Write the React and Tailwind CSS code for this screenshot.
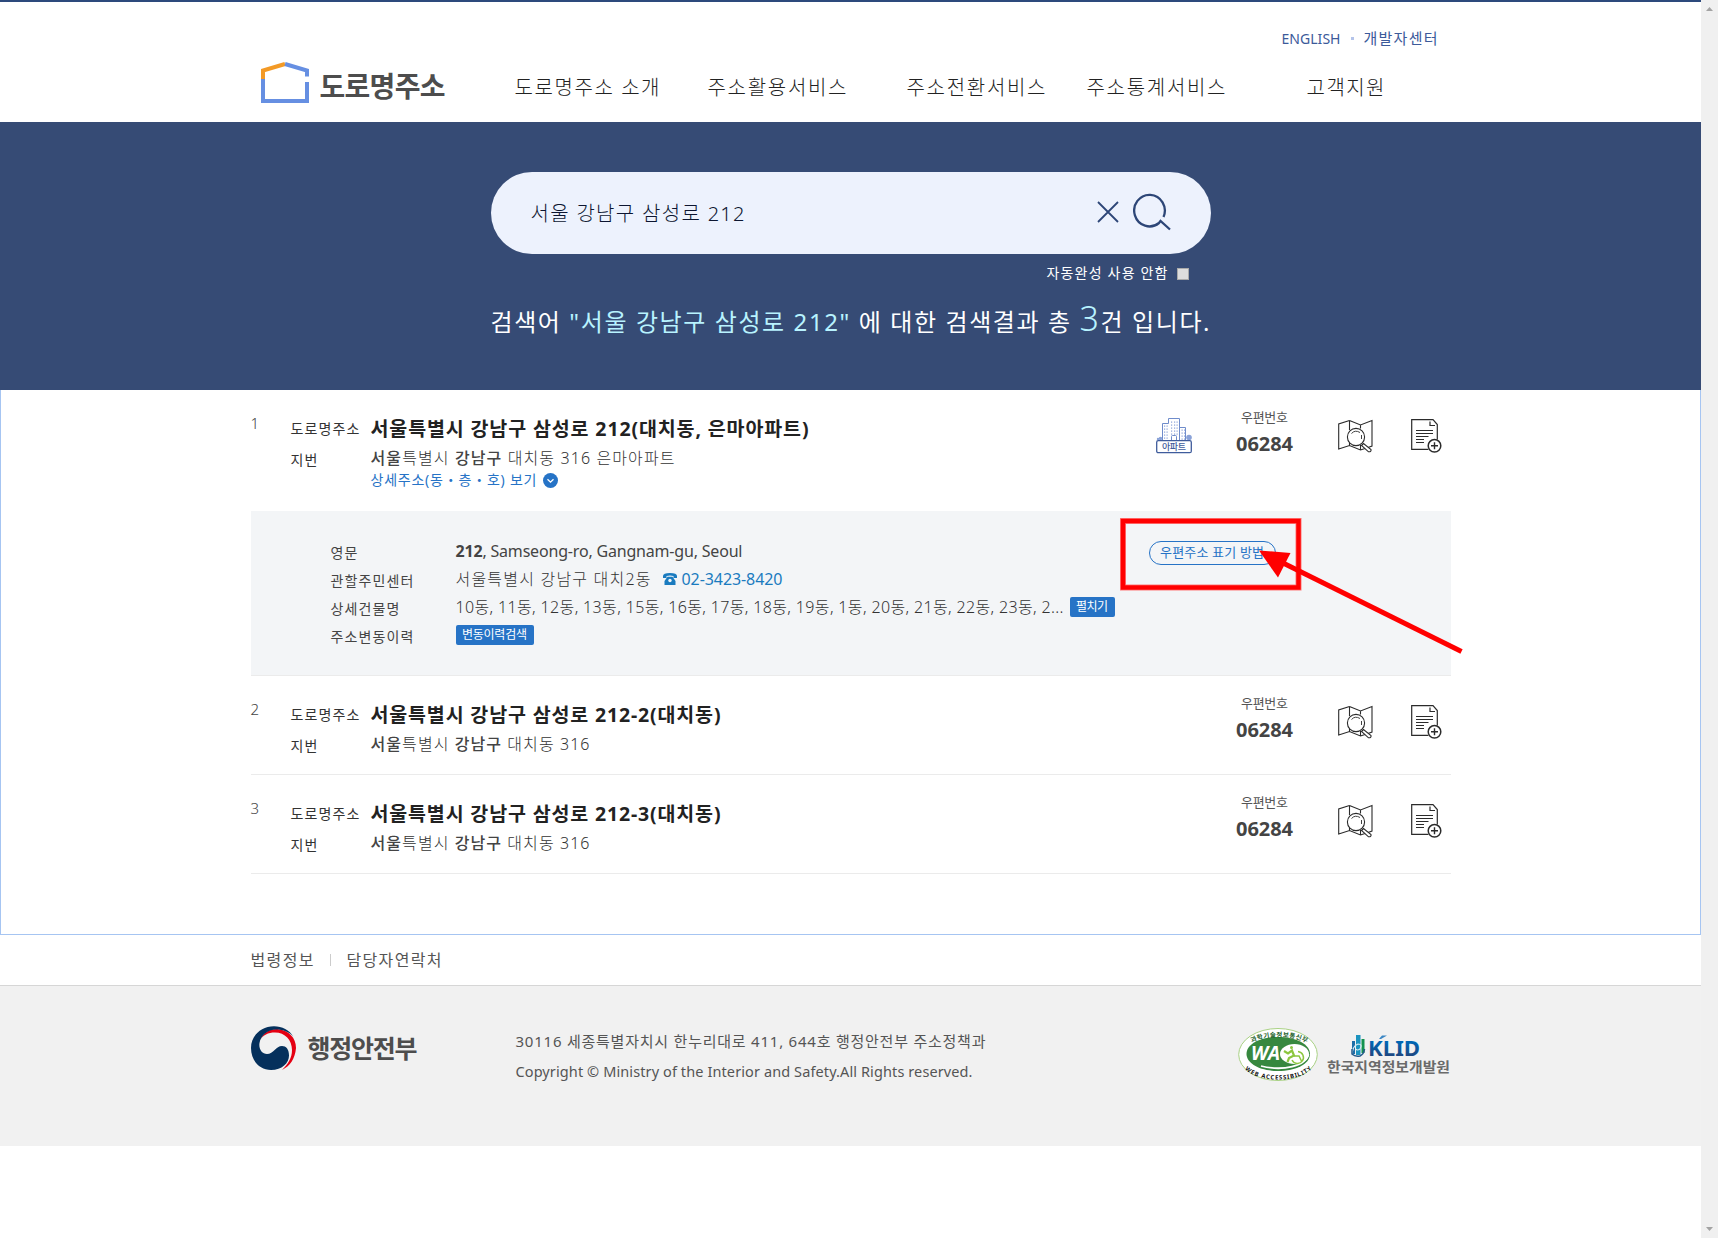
import React, { useLayoutEffect, useRef, useState } from "react";

/* Single line of text whose letter spacing is adjusted to fill a given width. */
function Fit({ w, className = "", children }) {
  const ref = useRef(null);
  const [gap, setGap] = useState(0);
  useLayoutEffect(() => {
    const el = ref.current;
    const n = el.textContent.length;
    setGap((w - el.getBoundingClientRect().width) / Math.max(1, n - 1));
  }, [w]);
  return (
    <span className={`inline-block whitespace-nowrap ${className}`}>
      <span ref={ref} style={{ letterSpacing: gap, marginRight: -gap }}>
        {children}
      </span>
    </span>
  );
}

function Logo() {
  return (
    <svg width="48" height="42" viewBox="0 0 48 42" fill="none" strokeWidth="4">
      <path d="M2 17V8.5L24 2" stroke="#f39a26" />
      <path d="M24 2L46 8.5V14.5M46 20V39H2V17" stroke="#668fe2" />
    </svg>
  );
}

function MapIcon() {
  return (
    <svg width="36" height="34" viewBox="0 0 36 34" fill="none" stroke="#2b2b2b" strokeWidth="1.1">
      <path d="M11.5 1.5L.7 5V30L11.5 26.5L22.5 31L27 29.5M11.5 1.5L22.5 6L34 1.5V27L30 28.5M11.5 1.5V11M11.5 24V26.5M22.5 6V9.500M22.5 26V31" />
      <circle cx="18" cy="18" r="8.600" fill="#fff" />
      <path d="M13.500 14.500Q17 10.500 22 13.500M23.500 16V20" strokeWidth=".9" />
      <path d="M23.500 26.500L25.500 24.500L33 30.500Q33.500 33 30.500 32.800Z" fill="#fff" />
    </svg>
  );
}

function DocIcon() {
  return (
    <svg width="31" height="34" viewBox="0 0 31 34" fill="none" stroke="#2b2b2b" strokeWidth="1.200">
      <path d="M17.500 30.400H.7V.7H22L26.300 5.500V20.500" />
      <path d="M19 2.500V6.500H24" />
      <path d="M5 11.500H22M5 14.500H22M5 17.500H17.500M5 20.500H13M5 23.500H13" />
      <circle cx="23.500" cy="26.800" r="6.300" fill="#fff" strokeWidth="1.500" />
      <path d="M20 26.800H27M23.500 23.300V30.300" strokeWidth="1.400" />
    </svg>
  );
}

function ApartmentIcon() {
  const dots = [];
  for (let y = 4; y < 18; y += 3) for (const x of [15.5, 18.5, 21]) dots.push([x, y]);
  for (let y = 8; y < 22; y += 3) for (const x of [8.5, 11]) dots.push([x, y]);
  for (let y = 12; y < 22; y += 3) for (const x of [26, 28.500]) dots.push([x, y]);
  return (
    <svg width="36" height="36" viewBox="0 0 36 36" fill="none" stroke="#6f8ccb">
      <path d="M6.500 22V5.500H12.500V.5H23.500V22M24 9.500H29.500V22M15.500 22V18.500Q15.500 17.500 16.500 17.500H19.500Q20.500 17.500 20.500 18.500V22" />
      <g fill="#8aa2d8" stroke="none">
        {dots.map(([x, y]) => (
          <rect key={`${x}-${y}`} x={x - 0.5} y={y - 0.5} width="1.200" height="1.200" />
        ))}
        <circle cx="33" cy="19.500" r="2.800" />
        <circle cx="4.500" cy="20.500" r="1.800" />
        <circle cx="2" cy="21" r="1.200" />
      </g>
      <rect x=".7" y="22.700" width="34.600" height="12" rx="1.500" stroke="#3f5c9c" strokeWidth="1.300" fill="#fff" />
      <text x="18" y="32" textAnchor="middle" textLength="24" fontSize="9" fontWeight="500" fill="#3f5c9c" stroke="none">아파트</text>
    </svg>
  );
}

function Taegeuk() {
  return (
    <svg width="46" height="44" viewBox="0 0 46 44">
      <path fill="#e50012" d="M9 14C13 6 19 3 26 3C38 4 45 12 45 22C44 33 39 40 31 44C37 38 41 32 41 24C41 14 34 6.500 24 6.500C17 6.500 12 9 9 14Z" />
      <path fill="#05305c" d="M23 .3C10 .3 0 10 0 22C0 35 9 44 20 44C31 44 38 37 38 29.500C38 23 35 20 31 20C25 20 22.500 28 16 28C11 28 7.500 23 8.500 17C10 9 17 3.500 25 3.500C32 3.500 39 6 42.500 11C38.500 4 31 .3 23 .3Z" />
    </svg>
  );
}

function WaMark() {
  return (
    <svg width="80" height="54" viewBox="0 0 80 54">
      <defs>
        <path id="waTop" d="M14 14.500A40 21 0 0 1 68 14.500" />
        <path id="waBottom" d="M8 40A35 16.500 0 0 0 73 39" />
      </defs>
      <ellipse cx="40" cy="26.500" rx="39.300" ry="26" fill="#fff" stroke="#a9d184" />
      <path d="M40 9C22 9 8.500 16 8.500 26C8.500 35.500 22 43 40 43C58 43 72 36 72 26C72 16 58 9 40 9Z" fill="#37883f" />
      <ellipse cx="56.500" cy="26" rx="14.500" ry="10" fill="#fff" />
      <path d="M23 38C45 43.500 68 38 70.500 26" fill="none" stroke="#fff" strokeWidth="1.800" />
      <text x="13" y="32" textLength="29" lengthAdjust="spacingAndGlyphs" fontSize="19" fontWeight="700" fontStyle="italic" fill="#fff">WA</text>
      <g fill="none" stroke="#8cc63f" strokeWidth="2">
        <circle cx="53.500" cy="19.500" r="1.500" fill="#8cc63f" stroke="none" />
        <path d="M46 23L50 25.500L54 22.500L56 27.500L51 30L49.500 34" strokeWidth="2.200" />
        <path d="M60 23.500A6 6 0 1 1 54 32M56 28H61L63.500 33" strokeWidth="1.500" />
      </g>
      <text fontSize="6.500" fontWeight="700" fill="#24632b">
        <textPath href="#waTop" textLength="56">과학기술정보통신부</textPath>
      </text>
      <text fontSize="6" fontWeight="700" fill="#111">
        <textPath href="#waBottom" textLength="69" dominantBaseline="middle">WEB ACCESSIBILITY</textPath>
      </text>
    </svg>
  );
}

function KlidMark() {
  return (
    <svg width="124" height="46" viewBox="0 0 124 46">
      <defs>
        <linearGradient id="klid" x1="0" y1="0" x2="0" y2="1">
          <stop offset=".3" stopColor="#0066b3" />
          <stop offset="1" stopColor="#2b3a6b" />
        </linearGradient>
      </defs>
      <rect x="25" y="7" width="3" height="13" fill="#1e6ea8" />
      <rect x="29" y="1" width="4.500" height="20" fill="#1b93bf" />
      <rect x="34.500" y="5" width="3" height="14" fill="#12924f" />
      <path d="M25 22Q25 12 31 10Q36 10 33 15Q30 17 29 15" fill="none" stroke="#d8eef4" strokeWidth="1.100" />
      <path d="M25 15V20Q28 23 33 22Q37 20 37.500 15" fill="none" stroke="#24598a" strokeWidth="1.500" />
      <text x="41" y="22" textLength="52" lengthAdjust="spacingAndGlyphs" fontSize="20.500" fontWeight="700" fill="url(#klid)">KLID</text>
      <path d="M52 5L55 1.500H60L54 5Z" fill="#3a86c4" />
      <text x="0" y="38" textLength="123" lengthAdjust="spacingAndGlyphs" fontSize="14" fontWeight="700" fill="#6a6a6a">한국지역정보개발원</text>
    </svg>
  );
}

function Result({ n, title, titleW, jibun, jibunW, detail, apartment, className }) {
  return (
    <article className={`flex items-start ${className}`}>
      <div className="w-10 pt-[23px] text-[15px] leading-5 font-light text-[#444]">{n}</div>
      <div className="w-20 pt-6 text-sm text-[#333]">
        <div className="leading-[30px]"><Fit w={69}>도로명주소</Fit></div>
        <div className="leading-8"><Fit w={27}>지번</Fit></div>
      </div>
      <div className="flex-1 pt-6">
        <h3 className="text-[19.500px] font-bold leading-[30px] text-[#222]"><Fit w={titleW}>{title}</Fit></h3>
        <p className="text-base font-light leading-7 text-[#333]">
          <Fit w={jibunW}>
            <span className="font-medium text-[#444]">서울</span>특별시 <b className="font-medium text-[#444]">강남구</b> {jibun}
          </Fit>
        </p>
        {detail && (
          <p className="flex items-center gap-1.5 text-sm leading-4 text-[#2673c6]">
            <Fit w={166}>상세주소(동・층・호) 보기</Fit>
            <svg width="15" height="15" viewBox="0 0 15 15" fill="none">
              <circle cx="7.500" cy="7.500" r="7.500" fill="#2673c6" />
              <path d="M4.500 6.200L7.500 9.200L10.500 6.200" stroke="#fff" strokeWidth="1.300" />
            </svg>
          </p>
        )}
      </div>
      {apartment && <div className="pt-7 pr-10"><ApartmentIcon /></div>}
      <div className="w-[66px] pt-[18px] text-center">
        <div className="text-[13px] leading-[18px] text-[#555]"><Fit w={47}>우편번호</Fit></div>
        <div className="text-xl font-bold leading-9 text-[#444]"><Fit w={57}>06284</Fit></div>
      </div>
      <div className="ml-10 pt-[29px]"><MapIcon /></div>
      <div className="ml-[37px] mr-[9px] pt-[29px]"><DocIcon /></div>
    </article>
  );
}

function Details() {
  return (
    <section className="relative flex h-[165px] items-start border-b border-[#ebebeb] bg-[#f3f5f7] pl-20 pt-[26px]">
      <dl className="grid w-[818px] auto-rows-[28px] grid-cols-[125px_1fr] text-base font-light leading-7 text-[#333]">
        <dt className="text-sm font-normal leading-8 text-[#444]"><Fit w={27}>영문</Fit></dt>
        <dd className="font-normal text-[#444]"><Fit w={287}><b>212</b>, Samseong-ro, Gangnam-gu, Seoul</Fit></dd>
        <dt className="text-sm font-normal leading-8 text-[#444]"><Fit w={83}>관할주민센터</Fit></dt>
        <dd className="flex h-7 items-center">
          <Fit w={195}>서울특별시 강남구 대치2동</Fit>
          <svg className="ml-3 mr-[5px]" width="14" height="12" viewBox="0 0 14 12" fill="#1a7bbf">
            <path d="M0 5V3Q0 0 7 0Q14 0 14 3V5H10.500V3Q7 2 3.500 3V5ZM4.500 3.800H9.500L12.500 8V12H1.500V8Z" />
            <circle cx="7" cy="7.500" r="1.700" fill="#f3f5f7" />
          </svg>
          <Fit w={101} className="font-normal text-[#1a7bbf]">02-3423-8420</Fit>
        </dd>
        <dt className="text-sm font-normal leading-8 text-[#444]"><Fit w={69}>상세건물명</Fit></dt>
        <dd className="flex h-7 items-center">
          <Fit w={608}>10동, 11동, 12동, 13동, 15동, 16동, 17동, 18동, 19동, 1동, 20동, 21동, 22동, 23동, 2...</Fit>
          <span className="ml-1.5 flex h-5 w-[45px] items-center justify-center rounded-[2px] bg-[#2673c6] text-xs font-normal text-white"><Fit w={32}>펼치기</Fit></span>
        </dd>
        <dt className="text-sm font-normal leading-8 text-[#444]"><Fit w={83}>주소변동이력</Fit></dt>
        <dd className="flex h-7 items-center">
          <span className="flex h-5 w-[78px] items-center justify-center rounded-[2px] bg-[#2673c6] text-xs font-normal text-white"><Fit w={65}>변동이력검색</Fit></span>
        </dd>
      </dl>
      <button className="mt-1 flex h-6 w-[127px] items-center justify-center rounded-full border border-[#2673c6] text-[13px] text-[#2673c6]">
        <Fit w={104}>우편주소 표기 방법</Fit>
      </button>
      <svg className="absolute left-[869px] top-[7px]" width="345" height="140" viewBox="0 0 345 140" fill="none">
        <rect x="3" y="3" width="175.500" height="66.500" stroke="#ff7a7a" strokeWidth="6" />
        <rect x="3" y="3" width="175.500" height="66.500" stroke="#f00" strokeWidth="4.400" />
        <path d="M155 41L341.500 133.500" stroke="#f00" strokeWidth="5" />
        <path d="M139 34L170.500 36.500L158 61Z" fill="#f00" transform="translate(0 -1.500)" />
      </svg>
    </section>
  );
}

export default function App() {
  return (
    <div className="flex h-[1238px] w-[1718px] overflow-hidden bg-white font-['Noto_Sans','Noto_Sans_CJK_KR',sans-serif]">
      <div className="w-[1701px]">
        <header className="h-[122px] border-t-2 border-[#2d4a7c]">
          <div className="mx-auto w-[1200px]">
            <div className="flex h-[58px] items-center justify-end pr-[13px] pt-[15px] text-[15px] text-[#3c5a9a]">
              <Fit w={59} className="text-sm">ENGLISH</Fit>
              <i className="mx-[10px] size-[3px] bg-[#b4c4ea]" />
              <Fit w={74}>개발자센터</Fit>
            </div>
            <div className="flex h-[46px] items-center pl-[10px]">
              <Logo />
              <Fit w={126} className="mt-1.5 ml-[11px] text-[28px] font-bold leading-9 text-[#4d4d4d]">도로명주소</Fit>
              <nav className="mt-2.5 flex text-xl leading-8 text-[#222] font-light">
                <Fit w={145} className="ml-[69px]">도로명주소 소개</Fit>
                <Fit w={139} className="ml-12">주소활용서비스</Fit>
                <Fit w={139} className="ml-[60px]">주소전환서비스</Fit>
                <Fit w={139} className="ml-[41px]">주소통계서비스</Fit>
                <Fit w={78} className="ml-[81px]">고객지원</Fit>
              </nav>
            </div>
          </div>
        </header>

        <section className="h-[268px] bg-[#364b75] pt-[50px]">
          <div className="mx-auto w-[720px]">
            <div className="flex h-[82px] items-center rounded-full bg-[#edf2fd] pl-10 pr-10">
              <Fit w={214} className="mt-px flex-1 text-xl font-light text-[#0c1530]">서울 강남구 삼성로 212</Fit>
              <svg className="-mt-0.5" width="22" height="22" viewBox="0 0 22 22" fill="none" stroke="#2d4677" strokeWidth="1.800">
                <path d="M1 1L21 21M21 1L1 21" />
              </svg>
              <svg className="-mt-0.5 ml-[14px]" width="38" height="38" viewBox="0 0 38 38" fill="none" stroke="#2d4677" strokeWidth="2.300">
                <path d="M30.500 24A15.300 15.800 0 1 0 26 30L27.500 28L37 36.500" />
              </svg>
            </div>
            <div className="flex h-[38px] items-center justify-end pr-[22px] text-sm text-white">
              <Fit w={121}>자동완성 사용 안함</Fit>
              <span className="ml-[9px] mt-px size-3 border border-[#aaa] bg-[#ddd]" />
            </div>
            <p className="h-12 text-2xl leading-[60px] text-white">
              <Fit w={719} className="-mt-[4px]">
                검색어 <span className="text-[#b8f3ff]">"서울 강남구 삼성로 212"</span> 에 대한 검색결과 총 <span className="text-[34px] font-light text-[#b8f3ff]">3</span>건 입니다.
              </Fit>
            </p>
          </div>
        </section>

        <main className="h-[545px] border-x border-b border-[#a6c5f2]">
          <div className="mx-auto w-[1200px]">
            <Result n="1" className="h-[121px]" title="서울특별시 강남구 삼성로 212(대치동, 은마아파트)" titleW={438} jibun="대치동 316 은마아파트" jibunW={304} detail apartment />
            <Details />
            <Result n="2" className="h-[99px] border-b border-[#ebebeb]" title="서울특별시 강남구 삼성로 212-2(대치동)" titleW={350} jibun="대치동 316" jibunW={219} />
            <Result n="3" className="h-[99px] border-b border-[#ebebeb]" title="서울특별시 강남구 삼성로 212-3(대치동)" titleW={350} jibun="대치동 316" jibunW={219} />
          </div>
        </main>

        <footer>
          <div className="mx-auto flex h-[50px] w-[1200px] items-center text-base text-[#555]">
            <Fit w={63}>법령정보</Fit>
            <i className="mx-4 h-3 w-px bg-[#ccc]" />
            <Fit w={95}>담당자연락처</Fit>
          </div>
          <div className="h-[161px] border-t border-[#d6d6d6] bg-[#f1f1f1]">
            <div className="mx-auto flex w-[1200px] items-start pt-10">
              <Taegeuk />
              <Fit w={110} className="ml-[11px] mt-1 text-[25px] font-bold leading-9 text-[#4d4d4d]">행정안전부</Fit>
              <div className="ml-[98px] flex-1 text-[15px] leading-[30px] text-[#555]">
                <p><Fit w={470}>30116 세종특별자치시 한누리대로 411, 644호 행정안전부 주소정책과</Fit></p>
                <p><Fit w={457} className="text-[14.500px]">Copyright © Ministry of the Interior and Safety.All Rights reserved.</Fit></p>
              </div>
              <div className="mt-0.5"><WaMark /></div>
              <div className="ml-[9px] mt-2"><KlidMark /></div>
            </div>
          </div>
        </footer>
      </div>
      <aside className="flex w-[17px] flex-col items-center justify-between bg-[#f0f0f0] py-[7px]">
        <svg width="7" height="4" viewBox="0 0 7 4" fill="#a3a3a3"><path d="M3.500 0L7 4H0Z" /></svg>
        <svg width="7" height="4" viewBox="0 0 7 4" fill="#a3a3a3"><path d="M3.500 4L7 0H0Z" /></svg>
      </aside>
    </div>
  );
}
